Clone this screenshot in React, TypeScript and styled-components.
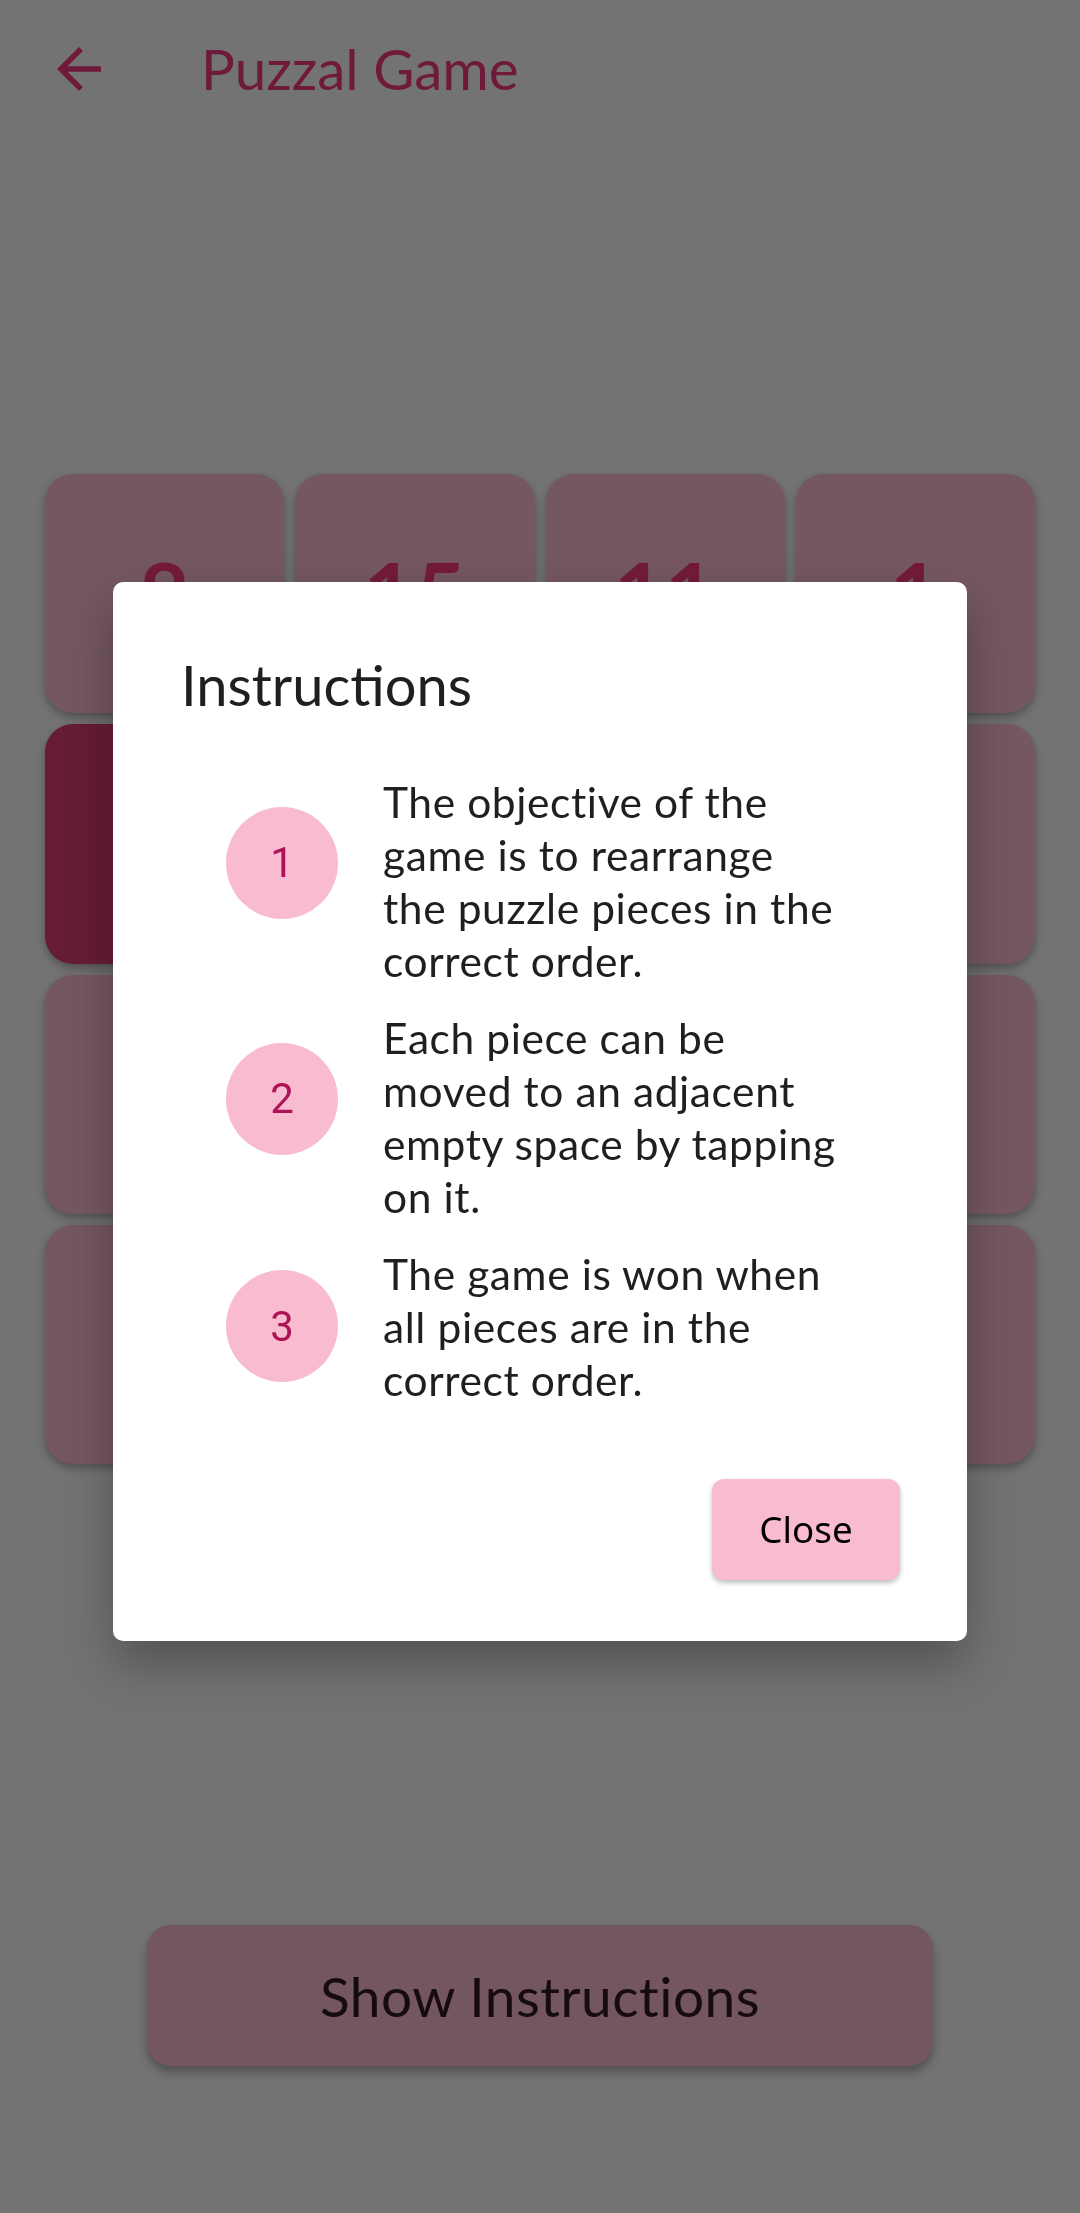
import React from "react";
import styled, { createGlobalStyle } from "styled-components";

const GlobalStyle = createGlobalStyle`
  html, body {
    margin: 0;
    padding: 0;
    background: #737373;
  }
  * { box-sizing: border-box; }
`;

const Screen = styled.div`
  width: 1080px;
  min-height: 2213px;
  background: #737373;
  display: flex;
  flex-direction: column;
  font-family: Lato, "Noto Sans", sans-serif;
`;

const AppBar = styled.header`
  height: 137px;
  display: flex;
  align-items: center;
  padding-left: 46px;
  gap: 89px;
`;

const BackButton = styled.button`
  width: 66px;
  height: 66px;
  padding: 0;
  border: none;
  background: transparent;
  display: flex;
  align-items: center;
  justify-content: center;
  color: #6f1a3a;
`;

const Title = styled.h1`
  margin: 0;
  font-family: Lato, sans-serif;
  font-weight: 400;
  font-size: 56.5px;
  line-height: 1.2;
  color: #6f1a3a;
`;

const Main = styled.main`
  display: flex;
  flex-direction: column;
  align-items: center;
  padding: 337px 45px 0;
`;

const Board = styled.div`
  width: 990px;
  display: grid;
  grid-template-columns: repeat(4, 1fr);
  gap: 11px;
`;

const Tile = styled.div<{ $empty?: boolean }>`
  aspect-ratio: 1 / 1;
  border-radius: 28px;
  background: ${(p) => (p.$empty ? "#661c35" : "#74575f")};
  box-shadow: 0 4px 9px rgba(0, 0, 0, 0.3);
  display: flex;
  align-items: center;
  justify-content: center;
  font-family: Lato, sans-serif;
  font-weight: 700;
  font-size: 88px;
  line-height: 1.2;
  color: #731a3a;
`;

const ShowButton = styled.button`
  margin-top: 461px;
  width: 786px;
  height: 141px;
  border: none;
  border-radius: 24px;
  background: #735660;
  box-shadow: 0 6px 10px rgba(0, 0, 0, 0.3);
  font-family: Lato, sans-serif;
  font-size: 55px;
  font-weight: 400;
  letter-spacing: 0.5px;
  color: #160b0f;
  display: flex;
  align-items: center;
  justify-content: center;
`;

const Overlay = styled.div`
  position: fixed;
  inset: 0;
  display: flex;
  align-items: center;
  justify-content: center;
`;

const Dialog = styled.div`
  margin-top: 9px;
  width: 854px;
  background: #ffffff;
  border-radius: 10px;
  box-shadow: 0 24px 48px rgba(0, 0, 0, 0.28);
  padding: 69px 67px 61px 68px;
  display: flex;
  flex-direction: column;
`;

const DialogTitle = styled.h2`
  margin: 0;
  font-family: Lato, sans-serif;
  font-weight: 400;
  font-size: 56px;
  line-height: 67px;
  color: #1f1f1f;
`;

const StepList = styled.ol`
  list-style: none;
  margin: 57px 0 0;
  padding: 0 0 0 45px;
  display: flex;
  flex-direction: column;
  gap: 24px;
`;

const Step = styled.li`
  display: flex;
  align-items: center;
  gap: 45px;
`;

const Badge = styled.span<{ $lift: number }>`
  flex: none;
  width: 112px;
  height: 112px;
  margin-bottom: ${(p) => p.$lift}px;
  border-radius: 50%;
  background: #f8bbd0;
  display: flex;
  align-items: center;
  justify-content: center;
  font-family: Roboto, sans-serif;
  font-size: 42px;
  color: #ad1457;
`;

const StepText = styled.p`
  margin: 0;
  width: 463px;
  font-family: Lato, sans-serif;
  font-size: 42.5px;
  letter-spacing: 0.6px;
  line-height: 53px;
  color: #1f1f1f;
`;

const Actions = styled.div`
  margin-top: 73px;
  display: flex;
  justify-content: flex-end;
`;

const CloseButton = styled.button`
  width: 188px;
  height: 101px;
  border: none;
  border-radius: 12px;
  background: #f8bbd0;
  box-shadow: 0 3px 5px rgba(0, 0, 0, 0.25);
  font-family: "Noto Sans", sans-serif;
  font-size: 36.75px;
  color: #000000;
  display: flex;
  align-items: center;
  justify-content: center;
`;

const tiles = [8, 15, 11, 1, 0, 3, 12, 7, 2, 10, 6, 13, 9, 4, 14, 5];

const steps = [
  { text: "The objective of the game is to rearrange the puzzle pieces in the correct order.", lift: 36 },
  { text: "Each piece can be moved to an adjacent empty space by tapping on it.", lift: 36 },
  { text: "The game is won when all pieces are in the correct order.", lift: 0 },
];

export default function App() {
  return (
    <>
      <GlobalStyle />
      <Screen>
        <AppBar>
          <BackButton aria-label="Back">
            <svg width="66" height="66" viewBox="0 0 24 24" fill="currentColor">
              <path d="M20 11H7.83l5.59-5.59L12 4l-8 8 8 8 1.41-1.41L7.83 13H20v-2z" />
            </svg>
          </BackButton>
          <Title>Puzzal Game</Title>
        </AppBar>
        <Main>
          <Board>
            {tiles.map((n, i) => (
              <Tile key={i} $empty={n === 0}>
                {n === 0 ? "" : n}
              </Tile>
            ))}
          </Board>
          <ShowButton>Show Instructions</ShowButton>
        </Main>
      </Screen>
      <Overlay>
        <Dialog role="dialog">
          <DialogTitle>Instructions</DialogTitle>
          <StepList>
            {steps.map((s, i) => (
              <Step key={i}>
                <Badge $lift={s.lift}>{i + 1}</Badge>
                <StepText>{s.text}</StepText>
              </Step>
            ))}
          </StepList>
          <Actions>
            <CloseButton>Close</CloseButton>
          </Actions>
        </Dialog>
      </Overlay>
    </>
  );
}
